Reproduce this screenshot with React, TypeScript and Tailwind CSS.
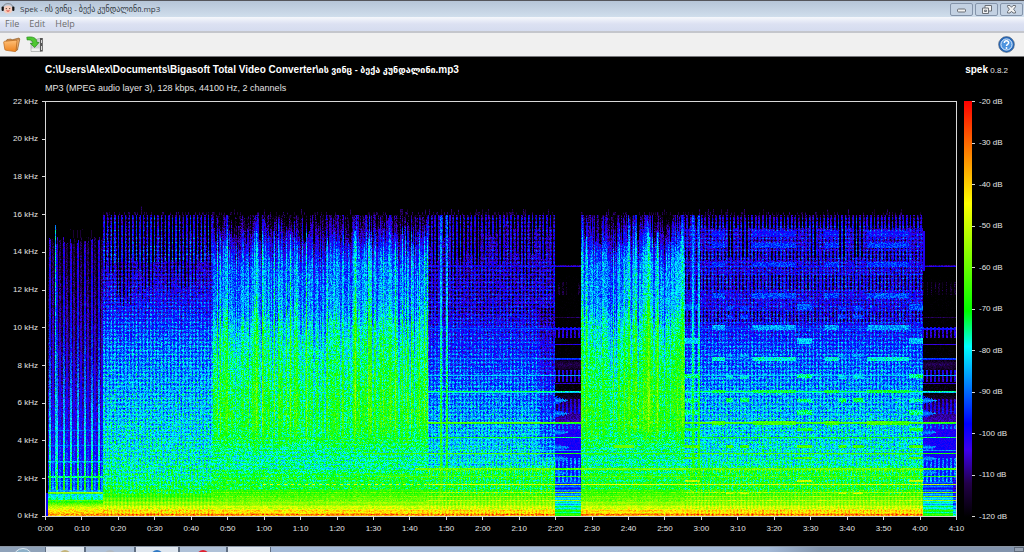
import React, { useLayoutEffect, useRef } from 'react';
import { clsx } from 'clsx';

type Point = [number, number];
type Bar = [number, number, number];

interface Section {
  from: number;
  to: number;
  kind: 'sparse' | 'dotted' | 'dense' | 'silent';
  // [row, dB] pairs, interpolated top to bottom
  curve: Point[];
  // whether held tones ring through this section
  tones: boolean;
}

const WIDTH = 910;
const HEIGHT = 414;

const PALETTE: [number, number, number, number][] = [
  [-120, 0, 0, 0],
  [-112, 34, 0, 72],
  [-104, 62, 0, 235],
  [-97.6, 0, 0, 255],
  [-79, 0, 255, 255],
  [-70.5, 0, 255, 0],
  [-44.6, 255, 255, 0],
  [-20, 255, 0, 0],
];

const LOW_END: Point[] = [
  [398, -60],
  [404, -52],
  [408, -43],
  [411, -39],
  [414, -36],
];

const SPARSE: Point[] = [
  [134, -117],
  [200, -111],
  [260, -106],
  [330, -99],
  [370, -94],
  [388, -88],
  [392, -82],
  [397, -77],
  [400, -67],
  ...LOW_END.slice(1),
];

const MID: Point[] = [
  [112, -116],
  [135, -111],
  [165, -105],
  [200, -99],
  [240, -90],
  [290, -85],
  [340, -80],
  [375, -76],
  [390, -70],
  ...LOW_END,
];

const DENSE: Point[] = [
  [113, -110],
  [132, -103],
  [145, -97],
  [158, -89],
  [185, -87],
  [205, -86],
  [222, -79],
  [250, -75],
  [310, -70],
  [335, -71],
  [350, -75],
  [366, -76],
  [372, -71],
  [385, -70],
  [392, -66],
  ...LOW_END,
];

const QUIET: Point[] = [
  [113, -109],
  [150, -106],
  [210, -102],
  [240, -97],
  [275, -92],
  [310, -87],
  [345, -82],
  [364, -80],
  [370, -73],
  [385, -71],
  [392, -67],
  ...LOW_END,
];

const BRIGHT_QUIET: Point[] = [
  [113, -111],
  [126, -103],
  [160, -102],
  [215, -100],
  [245, -93],
  [280, -88],
  [320, -83],
  [350, -79],
  [364, -77],
  [370, -72],
  [385, -70],
  [392, -66],
  ...LOW_END,
];

const SILENT: Point[] = [
  [160, -122],
  [255, -121],
  [262, -112],
  [272, -120],
  [290, -119],
  [302, -112],
  [320, -106],
  [325, -101],
  [370, -98],
  [382, -94],
  [390, -92],
  [397, -83],
  [404, -78],
  [408, -72],
  [414, -68],
];

const SECTIONS: Section[] = [
  { from: 2, to: 57, kind: 'sparse', curve: SPARSE, tones: false },
  { from: 57, to: 167, kind: 'dotted', curve: MID, tones: false },
  { from: 167, to: 382, kind: 'dense', curve: DENSE, tones: false },
  { from: 382, to: 509, kind: 'dotted', curve: QUIET, tones: true },
  { from: 509, to: 535, kind: 'silent', curve: SILENT, tones: true },
  { from: 535, to: 639, kind: 'dense', curve: DENSE, tones: false },
  { from: 639, to: 877, kind: 'dotted', curve: BRIGHT_QUIET, tones: true },
  { from: 877, to: 910, kind: 'silent', curve: SILENT, tones: true },
];

// [row, dB] of tones that ring through the quiet parts
const TONES: Point[] = [
  [163, -106],
  [164, -97],
  [215, -108],
  [226, -92],
  [227, -97],
  [242, -99],
  [256, -89],
  [257, -92],
  [273, -83],
  [281, -101],
  [289, -72],
  [290, -80],
  [320, -61],
  [321, -67],
  [335, -70],
  [348, -82],
  [351, -64],
  [366, -60],
  [367, -60],
  [374, -62],
  [382, -48],
  [390, -54],
  [394, -54],
  [398, -52],
];

const SPARSE_TONES: Point[] = [
  [328, -91],
  [343, -90],
  [359, -84],
  [360, -90],
  [374, -74],
  [375, -76],
  [379, -86],
  [390, -56],
  [391, -63],
  [398, -62],
];

const CHORUS_BARS: Bar[] = [
  [129, 134, -97],
  [141, 145, -93],
  [160, 164, -93],
  [191, 195, -91],
  [223, 227, -85],
  [255, 258, -77],
  [288, 290, -70],
  [319, 322, -64],
];
const CHORUS_SPANS: Point[] = [
  [666, 679],
  [707, 750],
  [779, 793],
  [821, 863],
];

const VERSE_BARS: Bar[] = [
  [202, 207, -90],
  [236, 241, -82],
  [272, 275, -74],
  [297, 299, -74],
  [308, 312, -73],
  [326, 328, -69],
  [343, 345, -63],
  [355, 356, -63],
  [378, 379, -50],
];
const VERSE_SPANS: Point[] = [
  [639, 654],
  [751, 766],
  [863, 878],
];

const FILL_BARS: Bar[] = [
  [204, 208, -93],
  [213, 216, -93],
  [252, 254, -86],
  [273, 276, -80],
  [296, 299, -71],
  [343, 345, -64],
  [390, 391, -50],
];
const FILL_SPANS: Point[] = [
  [680, 687],
  [694, 703],
  [793, 800],
  [807, 817],
];

const BRIGHT_COLUMNS = [394, 395, 400, 401, 646, 647, 652, 653];
const TAIL_ROWS = [298, 311, 330, 345, 356, 370];

function noise(x: number, y: number) {
  let h = Math.imul(x + 17, 374761393) ^ Math.imul(y + 71, 668265263);
  h = Math.imul(h ^ (h >>> 13), 1274126177);
  return ((h ^ (h >>> 16)) >>> 0) / 4294967295;
}

function interpolate(curve: Point[], at: number) {
  if (at <= curve[0][0]) return curve[0][1];
  for (let i = 1; i < curve.length; i++) {
    const [x1, v1] = curve[i];
    if (at <= x1) {
      const [x0, v0] = curve[i - 1];
      return v0 + ((v1 - v0) * (at - x0)) / (x1 - x0);
    }
  }
  return curve[curve.length - 1][1];
}

function color(db: number): [number, number, number] {
  if (db <= -120) return [0, 0, 0];
  for (let i = 1; i < PALETTE.length; i++) {
    const b = PALETTE[i];
    if (db <= b[0]) {
      const a = PALETTE[i - 1];
      const t = (db - a[0]) / (b[0] - a[0]);
      return [a[1] + (b[1] - a[1]) * t, a[2] + (b[2] - a[2]) * t, a[3] + (b[3] - a[3]) * t];
    }
  }
  return [255, 0, 0];
}

function inSpans(spans: Point[], x: number) {
  return spans.some(([a, b]) => x >= a && x < b);
}

function applyBars(db: number, bars: Bar[], x: number, y: number) {
  const bar = bars.find(([a, b]) => y >= a && y <= b);
  return bar ? Math.max(db, bar[2] + (noise(x, y) - 0.6) * 12) : db;
}

function silentLevel(x: number, y: number, start: number, base: number) {
  const n = noise(x, y) - 0.5;
  let db = base;
  if (y > 172) {
    const strip = x % 4 < 2;
    const faint = y > 179 && y < 193;
    const inBand =
      (y > 224 && y < 236) || (y > 267 && y < 280) || (y > 296 && y < 312) || (y > 321 && y < 327) || y > 355;
    if (strip && faint && noise(x, 3) > 0.4) db += 6 + n * 5;
    if (strip && inBand && y < 380) db += y < 290 ? 17 + n * 8 : 10 + n * 7;
    db += n * 6;
    if (y > 378) db += Math.cos((y * 2 * Math.PI) / 4) * 6;
  }
  // decaying tails right after the music stops
  const tail = 14 - (x - start);
  if (tail > 0 && y > 292) {
    const d = Math.min(...TAIL_ROWS.map((r) => Math.abs(y - r)));
    if (d < (tail + n * 6) / 3.5) db = Math.max(db, -87 - d * 3 + n * 8);
  }
  if (x > 800 && y > 128 && y < 169 && x - start < 2) db = -101;
  if (x > 906 && y > 375) db -= 10;
  return db;
}

function sparseLevel(x: number, y: number, base: number) {
  const n = noise(x, y) - 0.5;
  const phase = (x - 2) % 7;
  const strong = phase === 1 || phase === 2;
  const weak = phase === 4 || phase === 5;
  const top = 134 + noise(x, 5) * 8;
  if (y < top && !(x === 9 && y > 122)) return noise(x, y >> 3) > 0.94 && y > 126 ? -114 : -121;
  let db = base;
  if (y < 388) {
    if (strong) db += 12 + Math.max(0, (y - 240) / 16) + n * 12;
    else if (weak) db += 3 + n * 10;
    else db += n * 10 - 5;
    if (x === 9) db = Math.max(db, -82 + n * 18);
  } else {
    db += n * 8 + (y < 400 && strong ? 5 : 0);
  }
  const tone = SPARSE_TONES.find(([r]) => r === y);
  return tone ? Math.max(db, tone[1] + n * 8) : db;
}

function denseLevel(x: number, y: number, curve: Point[]) {
  const n = noise(x, y) - 0.5;
  const column = noise(x, 1000) - 0.5;
  const wide = noise(x >> 2, 2000) - 0.5;
  const mid = y < 335 ? 1 : 0.3;
  const late = x > 535;
  const shift = y < 335 ? column * 26 + wide * 14 : 0;

  let db = interpolate(curve, y + shift);
  db += column * 7 * mid + wide * 7 * mid + n * (y < 388 ? 15 : 7);
  db += Math.cos((x * 2 * Math.PI) / 5.3) * 2.5 * mid;
  db += Math.cos((y * 2 * Math.PI) / 4) * (y > 335 ? 3 : 1);

  const hot = noise(x, 31);
  if (hot > 0.86 && y > 128 && y < 342) db += 8 - Math.max(0, (y - 320) / 3);
  if (hot < 0.25 && y < 270) db -= 8 * (1 - y / 340);
  if (x > 583 && x < 639 && y > 120 && y < 330) db += 3;
  if (y < 142 && noise(x, 77) > 0.5 + (y - 113) / 60) db -= 12;

  if (y === 382 && ((x > 215 && x % 7 < 3) || late)) db = -47 + n * 5;
  if (y === 390 || y === 394 || y === 398) db = Math.max(db, -60 + n * 16);
  if ((y === 366 || y === 367) && (x > 368 || late)) db = Math.max(db, -59 + n * 8);
  if (y === 374 && x > 330) db = -62 + n * 7;
  if (y === 351 && x > 315) db = -65 + n * 6;
  if (late && (y === 320 || y === 289)) db = Math.max(db, -66 + n * 5);
  if (late && y > 342 && y < 346 && x > 567 && x < 588) db = -60;
  return db;
}

function dottedLevel(x: number, y: number, base: number) {
  const n = noise(x, y) - 0.5;
  const column = noise(x, 1000) - 0.5;
  const beat = Math.cos((x * 2 * Math.PI) / 3.6);
  const row = Math.cos((y * 2 * Math.PI) / 4);
  const fade = Math.max(0, 1 - y / 395);
  const depth = 5 + 5 * fade;
  const beatIndex = Math.round(x / 3.6);

  let db = base + beat * depth * 0.8 + row * depth * 0.6 + column * 7 * fade + n * (y < 392 ? 15 : 7);
  if (x < 167) {
    const reach = 125 + noise(beatIndex, 41) * 80;
    if (y < reach && beat < 0.1) db -= 10;
    if (y < 160 && beat > 0.3) db += 8;
  } else if (x < 509) {
    const reach = 118 + noise(beatIndex, 43) * 55;
    if (y < reach && beat < 0) db -= 13;
    if (y > 165 && y < 215 && row < 0 && beat < 0) db -= 5;
    if (x > 492 && y > 205 && y < 355) db -= 6;
  } else {
    const gap = (y > 148 && y < 158) || (y > 172 && y < 188) || (y > 208 && y < 220);
    if (y < 126 && beat < 0.1) db -= 13;
    if (gap && beat < -0.2) db -= 8;
    if (y < 155 && (inSpans(FILL_SPANS, x) || (x >= 764 && x < 770)) && beat < 0) db -= 12;
  }
  if (BRIGHT_COLUMNS.includes(x)) db = Math.max(db, -92 + (y - 113) / 9 - (y > 340 ? 4 : 0) + n * 14);
  if (x > 360 && y > 367 && y < 371 && x % 2 === 0) db += 8;
  if (x >= 639) {
    if (inSpans(CHORUS_SPANS, x)) db = applyBars(db, CHORUS_BARS, x, y);
    if (inSpans(VERSE_SPANS, x)) db = applyBars(db, VERSE_BARS, x, y);
    if (inSpans(FILL_SPANS, x)) db = applyBars(db, FILL_BARS, x, y);
  }
  return db;
}

function level(x: number, y: number): number {
  const section = SECTIONS.find((s) => x >= s.from && x < s.to);
  if (!section) return y > 390 ? -99 : -120;

  const { kind, curve, from } = section;
  const n = noise(x, y) - 0.5;
  const base = interpolate(curve, y);

  // transients that reach above the cut-off
  if (y < 113 && kind !== 'silent' && kind !== 'sparse') {
    const spike = noise(x, 9);
    const tall = x < 167 ? 9 : 6;
    const height = spike > 0.94 ? tall : spike > 0.75 ? 3 : 0;
    return y > 112 - height ? -113 + n * 9 : -122;
  }

  let db: number;
  if (kind === 'silent') db = silentLevel(x, y, from, base);
  else if (kind === 'sparse') db = sparseLevel(x, y, base);
  else if (kind === 'dense') db = denseLevel(x, y, curve);
  else db = dottedLevel(x, y, base);

  if (section.tones) {
    const tone = TONES.find(([r]) => r === y);
    if (tone) db = Math.max(db, tone[1] + n * (y > 360 ? 12 : 7) - (kind === 'silent' ? 4 : 0));
  }
  if (y > 404 && kind !== 'silent') {
    db += (noise(x >> 1, y) - 0.5) * 9;
    if (y === 412 && x % 5 < 3) db += 8;
  }
  return db;
}

const Spectrogram: React.FC = () => {
  const ref = useRef<HTMLCanvasElement>(null);

  useLayoutEffect(() => {
    const ctx = ref.current?.getContext('2d');
    if (!ctx) return;
    const image = ctx.createImageData(WIDTH, HEIGHT);
    for (let y = 0; y < HEIGHT; y++) {
      for (let x = 0; x < WIDTH; x++) {
        const [r, g, b] = color(level(x, y));
        const i = (y * WIDTH + x) * 4;
        image.data[i] = r;
        image.data[i + 1] = g;
        image.data[i + 2] = b;
        image.data[i + 3] = 255;
      }
    }
    ctx.putImageData(image, 0, 0);
  }, []);

  return (
    <div className="relative border border-[#d8d8d8]">
      <canvas
        ref={ref}
        width={WIDTH}
        height={HEIGHT}
        role="img"
        aria-label="Spectrogram"
        className="absolute inset-0 h-full w-full"
      />
    </div>
  );
};

const FREQUENCIES = [22, 20, 18, 16, 14, 12, 10, 8, 6, 4, 2, 0];
const SECONDS = Array.from({ length: 26 }, (_, i) => i * 10);
const DECIBELS = [-20, -30, -40, -50, -60, -70, -80, -90, -100, -110, -120];

const formatTime = (s: number) => `${Math.floor(s / 60)}:${String(s % 60).padStart(2, '0')}`;

const FrequencyAxis: React.FC = () => (
  <div className="flex flex-col justify-between">
    {FREQUENCIES.map((f) => (
      <div key={f} className="flex h-px items-center justify-end gap-1">
        <span>{f} kHz</span>
        <span className="h-px w-[3px] bg-[#d8d8d8]" />
      </div>
    ))}
  </div>
);

const TimeAxis: React.FC = () => (
  <div className="flex justify-between">
    {SECONDS.map((s) => (
      <div key={s} className="flex w-px flex-col items-center gap-1">
        <span className="h-[3px] w-px shrink-0 bg-[#d8d8d8]" />
        <span>{formatTime(s)}</span>
      </div>
    ))}
  </div>
);

const DecibelScale: React.FC = () => (
  <div className="flex pl-[7px]">
    <div className="w-2 bg-[linear-gradient(to_bottom,#ff0000_0%,#ffff00_24.6%,#00ff00_50.5%,#00ffff_59%,#0000ff_77.6%,#3e00eb_84%,#220048_92%,#000000_100%)]" />
    <div className="flex flex-col justify-between">
      {DECIBELS.map((d) => (
        <div key={d} className="flex h-px items-center gap-1">
          <span className="h-px w-[3px] bg-[#d8d8d8]" />
          <span>{d} dB</span>
        </div>
      ))}
    </div>
  </div>
);

const AppIcon: React.FC = () => (
  <svg viewBox="0 0 14 12" className="h-3 w-3.5" aria-hidden="true">
    <path d="M2 5C2.5 1.5 4.5 .7 7 .7S11.500 1.500 12 5" fill="none" stroke="#666" strokeWidth=".7" />
    <ellipse cx="7" cy="6.500" rx="4.600" ry="4" fill="#f6cdbd" />
    <rect x=".6" y="3.5" width="2.2" height="4.5" rx="1" fill="#111" />
    <rect x="11.2" y="3.5" width="2.2" height="4.5" rx="1" fill="#111" />
    <circle cx="5.3" cy="5.6" r=".6" fill="#432" />
    <circle cx="8.7" cy="5.6" r=".6" fill="#432" />
    <path d="M4.8 7.5c1.2 1.5 3.2 1.5 4.4 0z" fill="#d8402f" />
  </svg>
);

const FolderIcon: React.FC = () => (
  <svg viewBox="0 0 18 17" className="h-[17px] w-[18px]" aria-hidden="true">
    <defs>
      <linearGradient id="folder" x1="0" y1="0" x2="0" y2="1">
        <stop offset="0" stopColor="#ffc078" />
        <stop offset="1" stopColor="#ee8420" />
      </linearGradient>
    </defs>
    <path d="M3 5 4 3.5 8 3l1 .8L16 2l.8 1-2.3 11-2 1z" fill="#c98f52" stroke="#8c5420" strokeWidth=".6" />
    <path d="M14 4.500 16 4l-2 9z" fill="#f0b070" />
    <path
      d="M.7 6.500Q.6 5.500 1.600 5.300L13 4.200q1 0 1 1l-1 9.500q-.1.900-1 .9L3 14.300q-1-.1-1.200-1z"
      fill="url(#folder)"
      stroke="#b9671b"
      strokeWidth=".7"
    />
  </svg>
);

const SaveIcon: React.FC = () => (
  <svg viewBox="0 0 18 17" className="h-[17px] w-[18px]" aria-hidden="true">
    <path d="M5 5 13 2.500h2V15.500H5z" fill="#cfd2d2" stroke="#8f9393" strokeWidth=".5" />
    <path d="M14 2h2.800v13.500H14z" fill="#555" />
    <path d="M15 4h1v3h-1zM15 10h1v4h-1z" fill="#d8d8d8" />
    <path d="M5.500 12.500h8v2.500h-8z" fill="#f0f0f0" />
    <path
      d="M.8 1.200C6 .3 11 1.500 11 6.500h2L8.700 11.500 4.300 7.500h2.400C7 4.500 4.500 3.500 1.200 4z"
      fill="#4fc832"
      stroke="#248a18"
      strokeWidth=".7"
    />
  </svg>
);

const HelpIcon: React.FC = () => (
  <svg viewBox="0 0 17 17" className="h-[17px] w-[17px]" aria-hidden="true">
    <circle cx="8.5" cy="8.5" r="7.9" fill="#2469bd" stroke="#555f70" strokeWidth=".6" />
    <circle cx="8.5" cy="8.5" r="5.6" fill="#4f95df" stroke="#e8f2ff" strokeWidth="1" />
    <path d="M6.3 7c.1-3 4.500-2.800 4.400-.2 0 1.500-2.200 1.500-2.200 3.200" fill="none" stroke="#fff" strokeWidth="1.5" />
    <circle cx="8.5" cy="12" r=".9" fill="#fff" />
  </svg>
);

const WINDOW_ICONS: { label: string; icon: React.ReactNode }[] = [
  { label: 'Minimize', icon: <rect x="2.5" y="5" width="8" height="3" rx="1" /> },
  {
    label: 'Restore',
    icon: (
      <>
        <path d="M5 1.5h6.500v5.500H5z" />
        <path d="M2.500 4H8.500v5.500H2.500z" />
        <path d="M4.500 6.200h2v1.300h-2z" />
      </>
    ),
  },
  {
    label: 'Close',
    icon: (
      <path d="M2.500 1.500H5l1.500 1.800L8 1.500h2.500v1.300L8.600 5.200l1.900 2.500V9H8L6.500 7.200 5 9H2.500V7.700l1.900-2.500-1.900-2.400z" />
    ),
  },
];

const TASKS = [
  { width: 'w-10', active: true, icon: 'bg-[#c4b478]' },
  { width: 'w-[50px]', active: false, icon: 'bg-[#b3b9c0]' },
  { width: 'w-11', active: true, icon: 'bg-[#2f79c4]' },
  { width: 'w-12', active: false, icon: 'bg-[#e02030]' },
  { width: 'w-11', active: true, icon: 'bg-transparent' },
];

const TitleBar: React.FC = () => (
  <header className="flex h-[17px] items-center border-t border-[#55565c] bg-linear-to-b from-[#b6c5d8] to-[#d0deec] pl-px">
    <AppIcon />
    <h1 className="ml-[5px] flex-1 font-['Open_Sans','DejaVu_Sans',sans-serif] text-[8px] text-[#343a43]">
      Spek - ის ვინც - ბექა კუნდალინი.mp3
    </h1>
    <div className="flex gap-[2px] pr-px">
      {WINDOW_ICONS.map(({ label, icon }) => (
        <button
          key={label}
          aria-label={label}
          className="flex h-[13px] w-[23px] items-center justify-center rounded-xs border border-[#8494aa] bg-[#c3d1e2]"
        >
          <svg viewBox="0 0 13 11" className="h-[11px] w-[13px] fill-[#f2f2f2] stroke-[#6b7078]" aria-hidden="true">
            {icon}
          </svg>
        </button>
      ))}
    </div>
  </header>
);

export default function App() {
  return (
    <div className="flex h-screen min-h-[300px] flex-col bg-black font-['Liberation_Sans','DejaVu_Sans',sans-serif] text-[8px] leading-[10px] text-[#e4e4e4]">
      <TitleBar />

      {/* Menu */}
      <nav className="flex h-[14px] items-center gap-[10px] bg-linear-to-b from-[#f6f8fc] via-[#dce1f2] to-[#d5dcef] pl-[5px] font-['Open_Sans',sans-serif] text-[9px] text-[#6d6d6d]">
        <button>File</button>
        <button>Edit</button>
        <button>Help</button>
      </nav>

      {/* Toolbar */}
      <div className="flex h-[26px] items-center justify-between border-t-2 border-b border-t-[#c4c6cc] border-b-[#77777a] bg-[#f0f0f0] pr-[9px] pl-[3px]">
        <div className="flex gap-[5px]">
          <button aria-label="Open">
            <FolderIcon />
          </button>
          <button aria-label="Save">
            <SaveIcon />
          </button>
        </div>
        <button aria-label="Help">
          <HelpIcon />
        </button>
      </div>

      {/* Analysis view */}
      <main className="grid flex-1 grid-cols-[45px_1fr_67px] grid-rows-[44px_1fr_29px] whitespace-nowrap">
        <div className="col-span-2 col-start-2 flex justify-between pt-[7px] pr-4">
          <div>
            <h2 className="text-[10px] leading-3 font-bold text-white">
              C:\Users\Alex\Documents\Bigasoft Total Video Converter\
              <span className="text-[9px]">ის ვინც - ბექა კუნდალინი</span>.mp3
            </h2>
            <p className="mt-[6px] text-[9px] leading-3">MP3 (MPEG audio layer 3), 128 kbps, 44100 Hz, 2 channels</p>
          </div>
          <p className="leading-3">
            <b className="text-[10px] text-white">spek</b> 0.8.2
          </p>
        </div>
        <FrequencyAxis />
        <Spectrogram />
        <DecibelScale />
        <div className="col-start-2">
          <TimeAxis />
        </div>
      </main>

      {/* Taskbar */}
      <footer className="flex h-[6px] overflow-hidden border-t border-[#8b95a3] bg-linear-to-r from-[#a3b9d7] from-75% to-[#8294ad] to-80%">
        <div className="flex w-[45px] justify-center bg-[#8fa2b9]">
          <span className="mt-px h-5 w-5 shrink-0 rounded-full border border-[#dfeaf2] bg-[#8cb0c8]" />
        </div>
        {TASKS.map((task, i) => (
          <div
            key={i}
            className={clsx(
              'flex justify-center border-x border-[#5e6c7f]',
              task.width,
              task.active ? 'bg-[#dfe7f0]' : 'bg-[#afc1d8]'
            )}
          >
            <span className={clsx('mt-[3px] h-3 w-3 shrink-0 rounded-full', task.icon)} />
          </div>
        ))}
        <div className="ml-auto w-2.5 border border-[#5f6b7b] bg-[#96a2b3]" />
      </footer>
    </div>
  );
}
